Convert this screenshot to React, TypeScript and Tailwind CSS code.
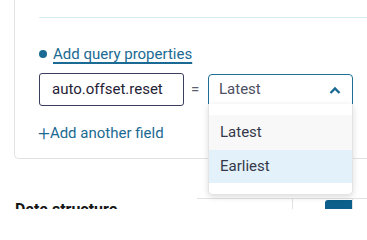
import React from "react";

export default function App() {
  return (
    <div className="relative w-[367px] h-[209px] overflow-hidden bg-white font-['Roboto',sans-serif] text-[#24273a]">
      <div className="ml-[14px] w-[400px] h-[159px] border-l border-b border-[#e2e2e2] rounded-bl-[5px] pl-[24px] flex flex-col">
        <div className="mt-[17px] h-px bg-[#d6edf5]" />
        <div className="mt-[25px] flex items-center h-[22px]">
          <span className="w-[8px] h-[8px] rounded-full bg-[#1b6a93] mr-[6px]" />
          <a className="text-[15px] leading-[22px] text-[#1b6a93] underline underline-offset-[3px] decoration-[1.5px]">
            Add query properties
          </a>
        </div>
        <div className="mt-[8px] flex items-center">
          <div className="w-[145px] h-[33px] border-[1.5px] border-[#3b3d5c] rounded-[3px] flex items-center pl-[12px] text-[15px] text-[#1f2235]">
            auto.offset.reset
          </div>
          <span className="w-[24px] pl-[7px] text-[15px] text-[#5a5d70]">=</span>
          <div className="relative w-[145px] h-[32px] border-[1.5px] border-b-[1px] border-[#1e6e98] rounded-t-[4px] flex items-center pl-[10px] text-[15px] text-[#4d5062]">
            Latest
            <svg className="absolute right-[11px] top-[11px]" width="12" height="9" viewBox="0 0 12 9">
              <polyline points="1.5,7 6,2.5 10.5,7" fill="none" stroke="#1b6a93" strokeWidth="2.4" />
            </svg>
          </div>
        </div>
        <div className="mt-[16px] flex items-center text-[15px] text-[#1b6a93] h-[22px]">
          <span className="text-[21px] leading-none font-light -ml-[1px]">+</span>
          Add another field
        </div>
      </div>
      <div className="mt-[39px] flex">
        <h2 className="ml-[15px] text-[16px] leading-[24px] font-bold text-[#151515]">Data structure</h2>
        <div className="ml-auto w-[170px] border-t border-[#e2e2e2] flex h-[20px]">
          <div className="w-[96px] border-r border-[#e2e2e2]" />
          <div className="ml-[32px] mt-[1px] w-[27px] bg-[#0b5f8a] rounded-tl-[3px]" />
          <div className="flex-1 border-l border-[#e2e2e2]" />
        </div>
      </div>
      <div className="absolute left-[208px] top-[104px] w-[145px] h-[91px] bg-white rounded-b-[5px] border border-t-0 border-[#e4e4e4] shadow-[0_2px_6px_rgba(0,0,0,0.14)] pt-[11px] flex flex-col">
        <div className="h-[35px] bg-[#f8f8f8] flex items-center pl-[11px] text-[15px] text-[#35384a]">Latest</div>
        <div className="h-[33px] bg-[#e3f1fa] flex items-center pl-[11px] text-[15px] text-[#35384a]">Earliest</div>
      </div>
    </div>
  );
}
